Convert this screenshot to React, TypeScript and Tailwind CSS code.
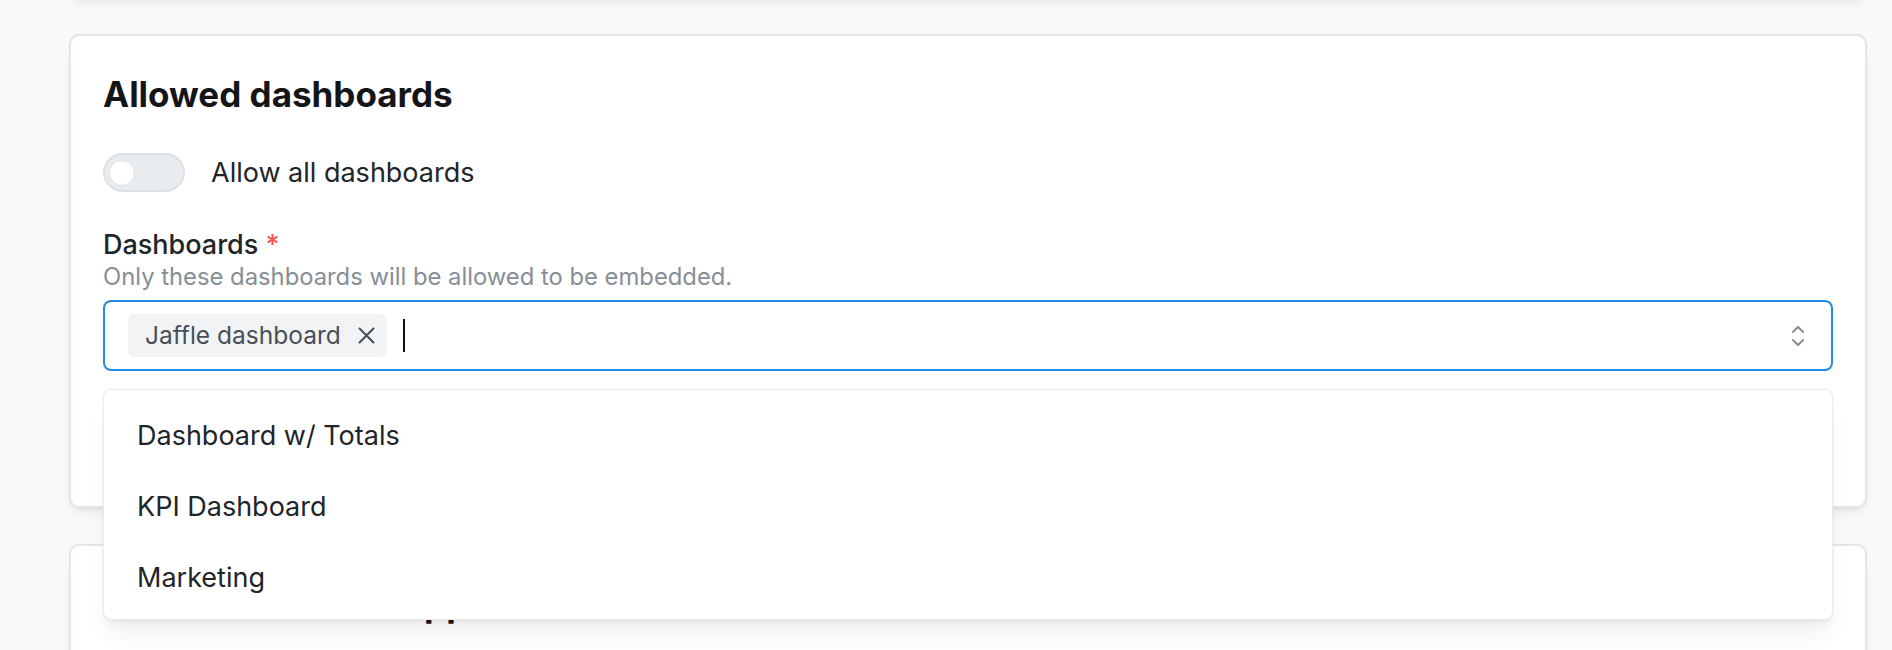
import { useState } from 'react'

const dashboards = ['Dashboard w/ Totals', 'KPI Dashboard', 'Marketing']

const cardShadow =
  'shadow-[0_1px_3px_rgba(0,0,0,0.05),0_10px_15px_-5px_rgba(0,0,0,0.05),0_7px_7px_-5px_rgba(0,0,0,0.04)]'

function CaretSortIcon({ className }: { className?: string }) {
  return (
    <svg viewBox="0 0 15 15" fill="none" className={className}>
      <path
        fill="currentColor"
        fillRule="evenodd"
        clipRule="evenodd"
        d="M4.93179 5.43179C4.75605 5.60753 4.75605 5.89245 4.93179 6.06819C5.10753 6.24392 5.39245 6.24392 5.56819 6.06819L7.49999 4.13638L9.43179 6.06819C9.60753 6.24392 9.89245 6.24392 10.0682 6.06819C10.2439 5.89245 10.2439 5.60753 10.0682 5.43179L7.81819 3.18179C7.73379 3.0974 7.61933 3.04999 7.49999 3.04999C7.38064 3.04999 7.26618 3.0974 7.18179 3.18179L4.93179 5.43179ZM10.0682 9.56819C10.2439 9.39245 10.2439 9.10753 10.0682 8.93179C9.89245 8.75606 9.60753 8.75606 9.43179 8.93179L7.49999 10.8636L5.56819 8.93179C5.39245 8.75606 5.10753 8.75606 4.93179 8.93179C4.75605 9.10753 4.75605 9.39245 4.93179 9.56819L7.18179 11.8182C7.35753 11.9939 7.64245 11.9939 7.81819 11.8182L10.0682 9.56819Z"
      />
    </svg>
  )
}

function CrossIcon({ className }: { className?: string }) {
  return (
    <svg viewBox="0 0 15 15" fill="none" className={className}>
      <path
        fill="currentColor"
        fillRule="evenodd"
        clipRule="evenodd"
        d="M11.7816 4.03157C12.0062 3.80702 12.0062 3.44295 11.7816 3.2184C11.5571 2.99385 11.193 2.99385 10.9685 3.2184L7.50005 6.68682L4.03164 3.2184C3.80708 2.99385 3.44301 2.99385 3.21846 3.2184C2.99391 3.44295 2.99391 3.80702 3.21846 4.03157L6.68688 7.49999L3.21846 10.9684C2.99391 11.193 2.99391 11.557 3.21846 11.7816C3.44301 12.0061 3.80708 12.0061 4.03164 11.7816L7.50005 8.31316L10.9685 11.7816C11.193 12.0061 11.5571 12.0061 11.7816 11.7816C12.0062 11.557 12.0062 11.193 11.7816 10.9684L8.31322 7.49999L11.7816 4.03157Z"
      />
    </svg>
  )
}

export default function App() {
  const [allowAll, setAllowAll] = useState(false)
  const [selected, setSelected] = useState(['Jaffle dashboard'])

  return (
    <div className="min-h-screen bg-[#f8f9fa] pl-[69px] pr-[25px] [font-family:Inter,sans-serif] text-[#212529]">
      <div className="flex flex-col gap-9">
        {/* previous card, scrolled out of view */}
        <div className={`-mt-[100px] h-[98px] rounded-[10px] border-2 border-[#e3e5e8] bg-white ${cardShadow}`} />

        {/* allowed dashboards */}
        <section className={`h-[474px] rounded-[10px] border-2 border-[#e3e5e8] bg-white px-8 pt-9 ${cardShadow}`}>
          <h2 className="h-[44px] text-[35px] font-bold leading-[44px] text-[#141517]">Allowed dashboards</h2>

          <div className="mt-[37px] flex h-[39px] items-center gap-[26px]">
            <button
              onClick={() => setAllowAll(!allowAll)}
              className="flex h-[39px] w-[82px] items-center rounded-full border-2 border-[#dee2e6] bg-[#e9ecef] pl-1"
            >
              <span className="h-[26px] w-[26px] rounded-full border border-[#dee2e6] bg-white" />
            </button>
            <span className="text-[27px] leading-[36px]">Allow all dashboards</span>
          </div>

          <div className="mt-[35px] h-[36px] text-[27px] font-medium leading-[36px] text-[#212529]">
            Dashboards <span className="text-[#fa5252]">*</span>
          </div>
          <p className="h-[28px] text-[23.8px] leading-[28px] text-[#868e96]">
            Only these dashboards will be allowed to be embedded.
          </p>

          <div className="relative mt-[9px]">
            <div className="flex h-[71px] items-center rounded-[8px] border-2 border-[#228be6] pl-[23px] pr-[16px]">
              {selected.map((name) => (
                <div
                  key={name}
                  className="flex h-[43px] items-center gap-[12px] rounded-[6px] bg-[#f1f3f5] pl-[17px] pr-[7px] text-[24.5px] text-[#495057]"
                >
                  <span>{name}</span>
                  <button onClick={() => setSelected(selected.filter((s) => s !== name))}>
                    <CrossIcon className="h-[27px] w-[27px] text-[#495057]" />
                  </button>
                </div>
              ))}
              <div className="ml-[16px] h-[33px] w-[2px] bg-[#111]" />
              <CaretSortIcon className="ml-auto h-[34px] w-[34px] text-[#868e96]" />
            </div>

            {/* dropdown */}
            <div className="absolute left-0 right-0 top-[calc(100%+18px)] z-10 rounded-[8px] border border-[#e9ecef] bg-white px-2 pt-[11px] pb-[5px] shadow-[0_1px_3px_rgba(0,0,0,0.05),0_20px_25px_-5px_rgba(0,0,0,0.05),0_10px_10px_-5px_rgba(0,0,0,0.04)]">
              {dashboards.map((d) => (
                <div key={d} className="flex h-[71px] items-center rounded-[6px] pl-[25px] text-[27px] text-[#212529]">
                  {d}
                </div>
              ))}
            </div>
          </div>
        </section>

        {/* preview & code snippet */}
        <section className={`h-[300px] rounded-[10px] border-2 border-[#e3e5e8] bg-white px-8 pt-9 ${cardShadow}`}>
          <h2 className="h-[44px] text-[35px] font-bold leading-[44px] text-[#141517]">Preview &amp; code snippet</h2>
        </section>
      </div>
    </div>
  )
}
